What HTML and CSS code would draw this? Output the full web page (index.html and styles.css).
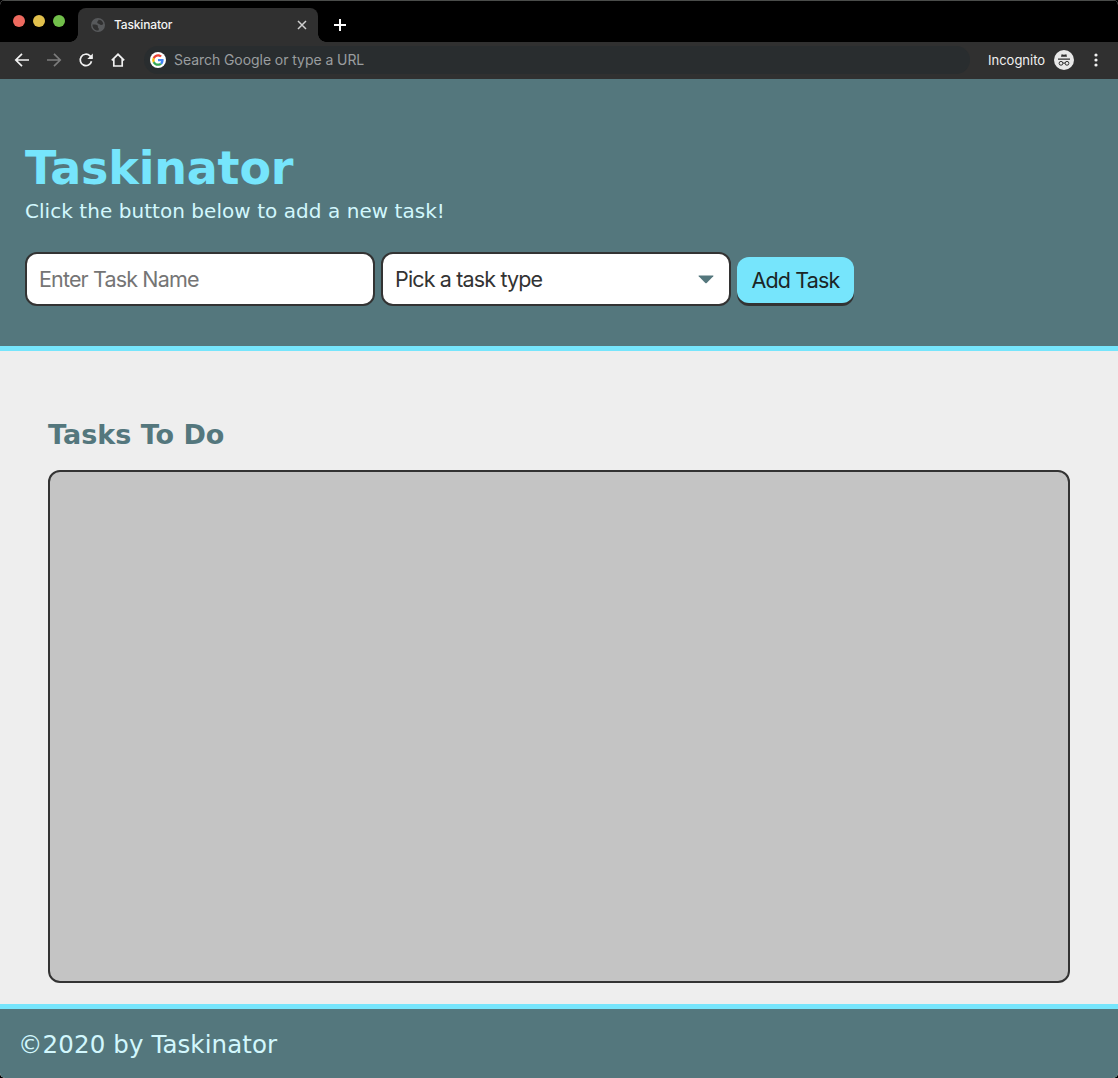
FILE: index.html
```html
<!DOCTYPE html>
<html lang="en">
<head>
<meta charset="utf-8">
<title>Taskinator</title>
<link rel="stylesheet" href="styles.css">
</head>
<body>
<div class="window">
  <div class="tab-strip">
    <div class="lights"><span class="light red"></span><span class="light yellow"></span><span class="light green"></span></div>
    <div class="tab">
      <svg class="globe" width="14" height="14" viewBox="0 0 14 14"><circle cx="7" cy="7" r="7" fill="#57595b"/><path d="M1.500 6.500c2 0 4-.2 5 .8s-.2 2 .8 2.700c1 .6.4 1.500.2 2.500C4 13 1.200 10 1.500 6.500zM7.500 1.700c1.500-.3 4.500 1 4.800 4.300-1.500 1.600-3 1-3.800.2C7.700 5.400 6 5.500 6.200 4.200 6.400 3 7.500 3 7.500 1.700z" fill="#303030"/></svg>
      <span class="tab-title">Taskinator</span>
      <svg class="close" width="10" height="10" viewBox="0 0 10 10"><path d="M1 1l8 8M9 1L1 9" stroke="#cfcfcf" stroke-width="1.500"/></svg>
    </div>
    <div class="new-tab"><svg width="12" height="12" viewBox="0 0 12 12"><path d="M6 0v12M0 6h12" stroke="#fff" stroke-width="2"/></svg></div>
  </div>
  <div class="toolbar">
    <div class="nav">
      <svg width="16" height="16" viewBox="0 0 16 16"><path d="M15 8H2M8 1.800L1.800 8 8 14.200" fill="none" stroke="#f1f1f1" stroke-width="1.700"/></svg>
      <svg width="16" height="16" viewBox="0 0 16 16"><path d="M1 8h13M8 1.800L14.200 8 8 14.200" fill="none" stroke="#7c7c7c" stroke-width="1.700"/></svg>
      <svg width="16" height="16" viewBox="0 0 16 16"><path d="M13.500 9.200A5.700 5.700 0 1 1 12 3.900L14 6" fill="none" stroke="#f1f1f1" stroke-width="1.700"/><path d="M14.800 1.500V7H9.300z" fill="#f1f1f1"/></svg>
      <svg width="16" height="16" viewBox="0 0 16 16"><path d="M1.800 8.300L8 2.300l6.200 6M3.800 7v7h8.400V7" fill="none" stroke="#f1f1f1" stroke-width="1.700"/></svg>
    </div>
    <div class="address">
      <svg class="google" width="16" height="16" viewBox="0 0 48 48"><circle cx="24" cy="24" r="24" fill="#fff"/><g transform="translate(6.500 6.500) scale(.73)"><path fill="#ea4335" d="M24 9.500c3.500 0 6.700 1.200 9.200 3.600l6.900-6.900C35.900 2.400 30.500 0 24 0 14.600 0 6.500 5.400 2.600 13.200l8 6.200C12.400 13.700 17.700 9.500 24 9.500z"/><path fill="#4285f4" d="M47 24.600c0-1.600-.2-3.100-.4-4.600H24v9h12.900c-.6 3-2.200 5.500-4.700 7.200l7.700 6C44.400 38 47 32 47 24.600z"/><path fill="#fbbc05" d="M10.500 28.600a14.500 14.500 0 0 1 0-9.200l-8-6.200a24 24 0 0 0 0 21.600z"/><path fill="#34a853" d="M24 48c6.500 0 11.900-2.100 15.900-5.800l-7.700-6c-2.100 1.500-4.900 2.300-8.200 2.300-6.300 0-11.600-4.200-13.500-9.900l-8 6.200C6.500 42.600 14.600 48 24 48z"/></g></svg>
      <span>Search Google or type a URL</span>
    </div>
    <span class="incognito">Incognito</span>
    <svg class="spy" width="20" height="20" viewBox="0 0 20 20"><circle cx="10" cy="10" r="10" fill="#e8e8e8"/><path d="M7 6.800L7.600 4.200l2.400.5 2.400-.5.600 2.600z" fill="#303030"/><path d="M4 9.100h12" stroke="#303030" stroke-width="1.300"/><g fill="none" stroke="#303030"><circle cx="7" cy="13.300" r="1.900"/><circle cx="13" cy="13.300" r="1.900"/><path d="M8.900 13.300q1.100-.8 2.200 0"/></g></svg>
    <svg class="dots" width="4" height="14" viewBox="0 0 4 14"><g fill="#f1f1f1"><circle cx="2" cy="2" r="1.600"/><circle cx="2" cy="7" r="1.600"/><circle cx="2" cy="12" r="1.600"/></g></svg>
  </div>
  <header class="page-header">
    <h1>Taskinator</h1>
    <p>Click the button below to add a new task!</p>
    <form class="task-form">
      <input class="field" type="text" placeholder="Enter Task Name">
      <div class="field select"><span>Pick a task type</span><svg width="16" height="9" viewBox="0 0 16 9"><path d="M1 .5h14a.5.500 0 0 1 .3.800L8.700 8a1 1 0 0 1-1.400 0L.7 1.300A.5.500 0 0 1 1 .5z" fill="#54777d"/></svg></div>
      <button class="add" type="button">Add Task</button>
    </form>
  </header>
  <main class="content">
    <h2>Tasks To Do</h2>
    <div class="task-list"></div>
  </main>
  <footer class="page-footer">©2020 by Taskinator</footer>
</div>
</body>
</html>
```
FILE: styles.css
```css
* { box-sizing: border-box; }
body { margin: 0; background: #000; font-family: "DejaVu Sans", sans-serif; }
.window { display: flex; flex-direction: column; width: 1118px; height: 1078px; overflow: hidden; background: #eee; border-radius: 5px; }
.tab-strip { display: flex; flex: none; height: 42px; background: #000; border-top: 1px solid #4a4c4a; font-family: Inter, sans-serif; }
.lights { display: flex; gap: 8px; width: 78px; padding: 14px 0 0 13px; background: radial-gradient(circle at 0 0, #000 7.500px, #303030 8px) right bottom / 8px 8px no-repeat; }
.light { width: 12px; height: 12px; border-radius: 50%; }
.red { background: #ee6a5f; }
.yellow { background: #e1c04c; }
.green { background: #71bf4a; }
.tab { display: flex; align-items: center; width: 240px; height: 34px; margin-top: 7px; padding: 0 11px 0 13px; background: #303030; border-radius: 8px 8px 0 0; }
.tab-title { flex: 1; margin: -2px 0 0 9px; color: #f4f4f4; font-size: 12px; font-weight: 500; letter-spacing: -.15px; }
.new-tab { padding: 18px 0 0 16px; background: radial-gradient(circle at 100% 0, #000 7.500px, #303030 8px) left bottom / 8px 8px no-repeat; }
.new-tab svg { display: block; }
.toolbar { display: flex; flex: none; align-items: center; height: 37px; padding: 0 20px 2px 14px; background: #303030; font-family: Inter, sans-serif; }
.nav { display: flex; gap: 16px; }
.address { display: flex; align-items: center; gap: 8px; width: 826px; height: 28px; margin-left: 18px; padding-left: 6px; border-radius: 14px; background: #292d2f; color: #9a9d9f; font-size: 14px; letter-spacing: -.06px; }
.incognito { width: 66px; margin-left: 18px; color: #f1f1f1; font-size: 13px; white-space: nowrap; }
.dots { margin-left: 20px; }
.page-header { flex: none; height: 272px; padding: 61px 25px 0; background: #54777d; border-bottom: 5px solid #76e5fc; }
h1 { margin: 0; color: #76e5fc; font-size: 46px; line-height: 56px; letter-spacing: -.2px; }
.page-header p { margin: 2px 0 0; color: #d2f7fd; font-size: 20px; line-height: 26px; letter-spacing: .05px; }
.task-form { display: flex; gap: 6px; margin-top: 28px; }
.field { width: 350px; height: 54px; padding: 0 12px; border: 2px solid #333; border-radius: 12px; background: #fff; color: #333; font: 21.5px Inter, sans-serif; letter-spacing: -.85px; }
.field::placeholder { color: #757575; opacity: 1; }
.select { display: flex; align-items: center; justify-content: space-between; padding-right: 15px; }
.add { width: 117px; height: 46px; margin-top: 5px; padding: 0; border: 0; border-radius: 12px; background: #76e5fc; box-shadow: 0 3px 0 #333; color: #1b2526; font: 21.5px Inter, sans-serif; letter-spacing: -.85px; }
.content { flex: 1; padding: 66px 48px 0; background: #eee; }
h2 { margin: 0; color: #54777d; font-size: 27px; line-height: 36px; }
.task-list { height: 513px; margin-top: 17px; border: 2px solid #333; border-radius: 12px; background: #c4c4c4; }
.page-footer { flex: none; height: 74px; padding: 20px 18px 0; border-top: 5px solid #76e5fc; background: #54777d; color: #d2f7fd; font-size: 24.5px; line-height: 32px; letter-spacing: .1px; }
```
